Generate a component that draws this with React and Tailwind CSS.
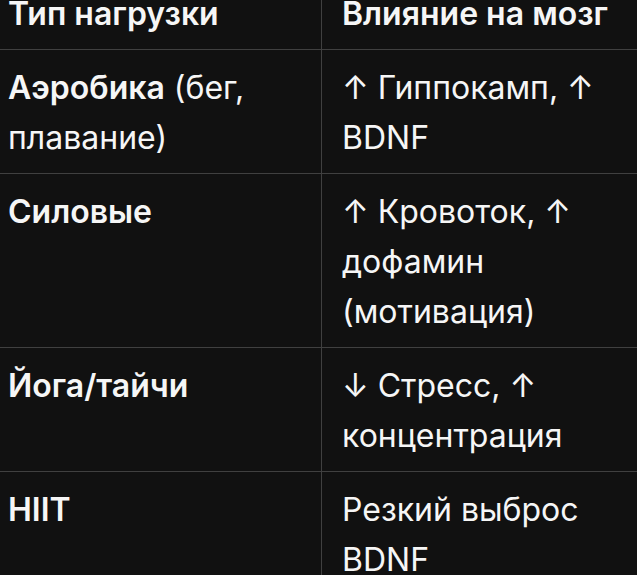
export default function App() {
  const rows = [
    { a: <><span className="font-semibold">Аэробика</span> (бег, плавание)</>, b: "↑ Гиппокамп, ↑ BDNF" },
    { a: <span className="font-semibold">Силовые</span>, b: "↑ Кровоток, ↑ дофамин (мотивация)" },
    { a: <span className="font-semibold">Йога/тайчи</span>, b: "↓ Стресс, ↑ концентрация" },
    { a: <span className="font-semibold">HIIT</span>, b: "Резкий выброс BDNF" },
  ];
  return (
    <div className="w-[637px] h-[575px] overflow-hidden bg-[#111111] text-[#f6f6f6] font-['Inter','Roboto',sans-serif] text-[32px] leading-[50px]">
      <div className="-mt-[24px] w-[700px]">
        <div className="grid grid-cols-[322px_1fr] border-b border-[#404040]">
          <div className="pl-[8px] pr-[20px] pt-[13px] pb-[10px] border-r border-[#404040] font-semibold whitespace-nowrap">Тип нагрузки</div>
          <div className="pl-[20px] pt-[13px] pb-[10px] font-semibold whitespace-nowrap">Влияние на мозг</div>
        </div>
        {rows.map((r, i) => (
          <div key={i} className="grid grid-cols-[322px_1fr] border-b border-[#404040]">
            <div className="pl-[8px] pr-[20px] pt-[13px] pb-[10px] border-r border-[#404040]">{r.a}</div>
            <div className="pl-[20px] pt-[13px] pb-[10px] w-[314px]">{r.b}</div>
          </div>
        ))}
      </div>
    </div>
  );
}
